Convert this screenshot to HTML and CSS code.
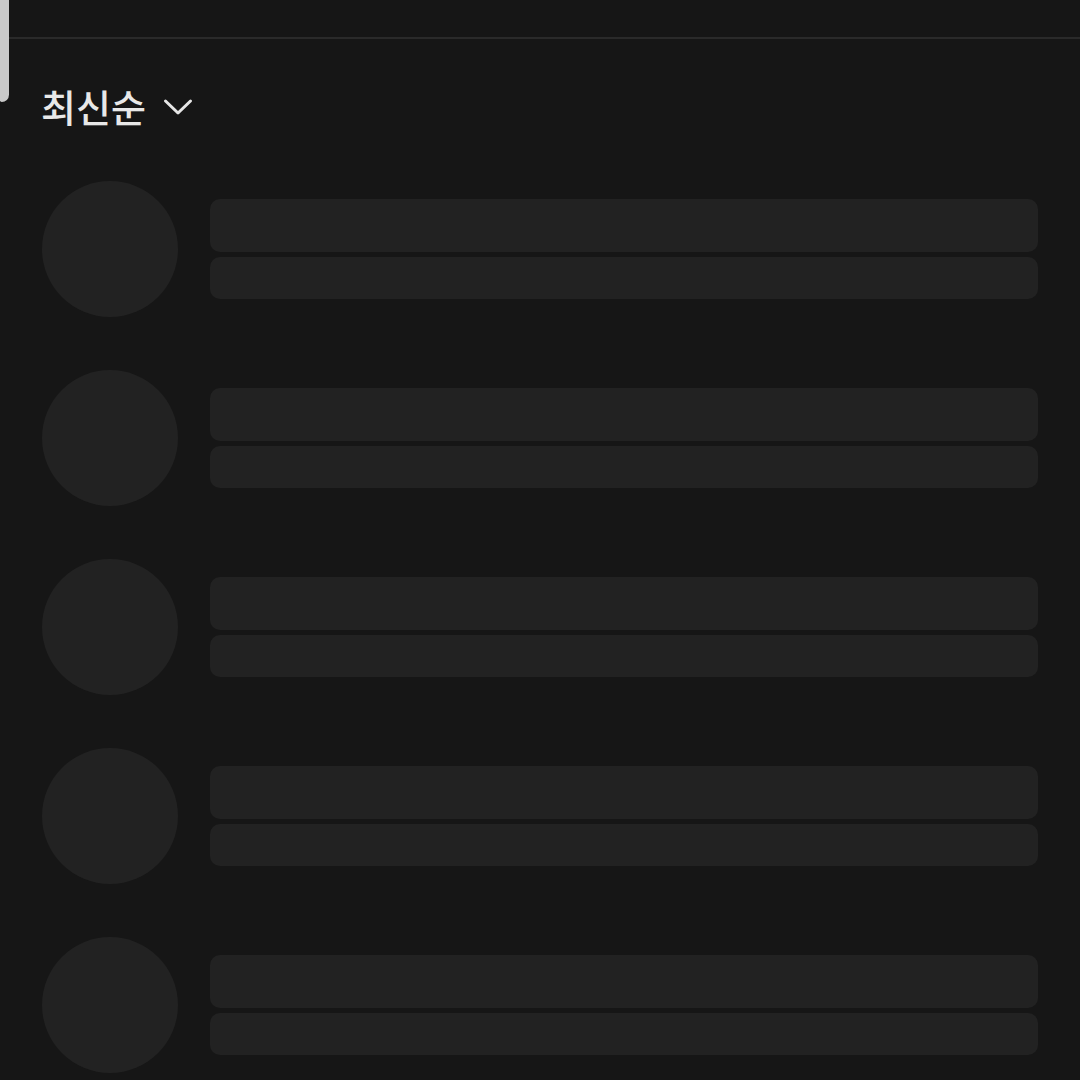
FILE: index.html
```html
<!DOCTYPE html>
<html lang="ko">
<head>
<meta charset="utf-8">
<link rel="stylesheet" href="styles.css">
</head>
<body>
<div class="thumb"></div>
<div class="topbar"></div>
<div class="sort">
  <span class="sort-label">최신순</span>
  <svg class="chev" width="30" height="18" viewBox="0 0 30 18"><path d="M2.5 3 L15 15 L27.5 3" fill="none" stroke="#e6e6e6" stroke-width="3" stroke-linecap="round" stroke-linejoin="round"/></svg>
</div>
<div class="list">
  <div class="row"><div class="avatar"></div><div class="lines"><div class="line l1"></div><div class="line l2"></div></div></div>
  <div class="row"><div class="avatar"></div><div class="lines"><div class="line l1"></div><div class="line l2"></div></div></div>
  <div class="row"><div class="avatar"></div><div class="lines"><div class="line l1"></div><div class="line l2"></div></div></div>
  <div class="row"><div class="avatar"></div><div class="lines"><div class="line l1"></div><div class="line l2"></div></div></div>
  <div class="row"><div class="avatar"></div><div class="lines"><div class="line l1"></div><div class="line l2"></div></div></div>
</div>
</body>
</html>
```
FILE: styles.css
```css
html, body {
  margin: 0;
  padding: 0;
  background: #161616;
  width: 1080px;
  height: 1080px;
  overflow: hidden;
  font-family: "Noto Sans CJK KR", "Noto Sans", sans-serif;
}
body { position: relative; }
.thumb {
  position: absolute;
  left: 0;
  top: 0;
  width: 9px;
  height: 102px;
  background: #c9c9c9;
  border-bottom-right-radius: 8px;
  border-bottom-left-radius: 2px;
}
.topbar {
  height: 37px;
  border-bottom: 2px solid #2a2a2a;
}
.sort {
  display: flex;
  align-items: center;
  gap: 17px;
  padding: 43px 0 0 41px;
  height: 48px;
}
.sort-label {
  color: #e8e8e8;
  font-size: 38px;
  font-weight: 500;
  line-height: 48px;
}
.chev { margin-top: 1px; }
.list {
  display: flex;
  flex-direction: column;
  gap: 53px;
  padding: 51px 42px 0 42px;
}
.row {
  display: flex;
  align-items: center;
  gap: 32px;
}
.avatar {
  width: 136px;
  height: 136px;
  border-radius: 50%;
  background: #222222;
  flex: none;
}
.lines {
  flex: 1;
  display: flex;
  flex-direction: column;
  gap: 5px;
}
.line {
  background: #222222;
  border-radius: 10px;
}
.l1 { height: 53px; }
.l2 { height: 42px; }
```
